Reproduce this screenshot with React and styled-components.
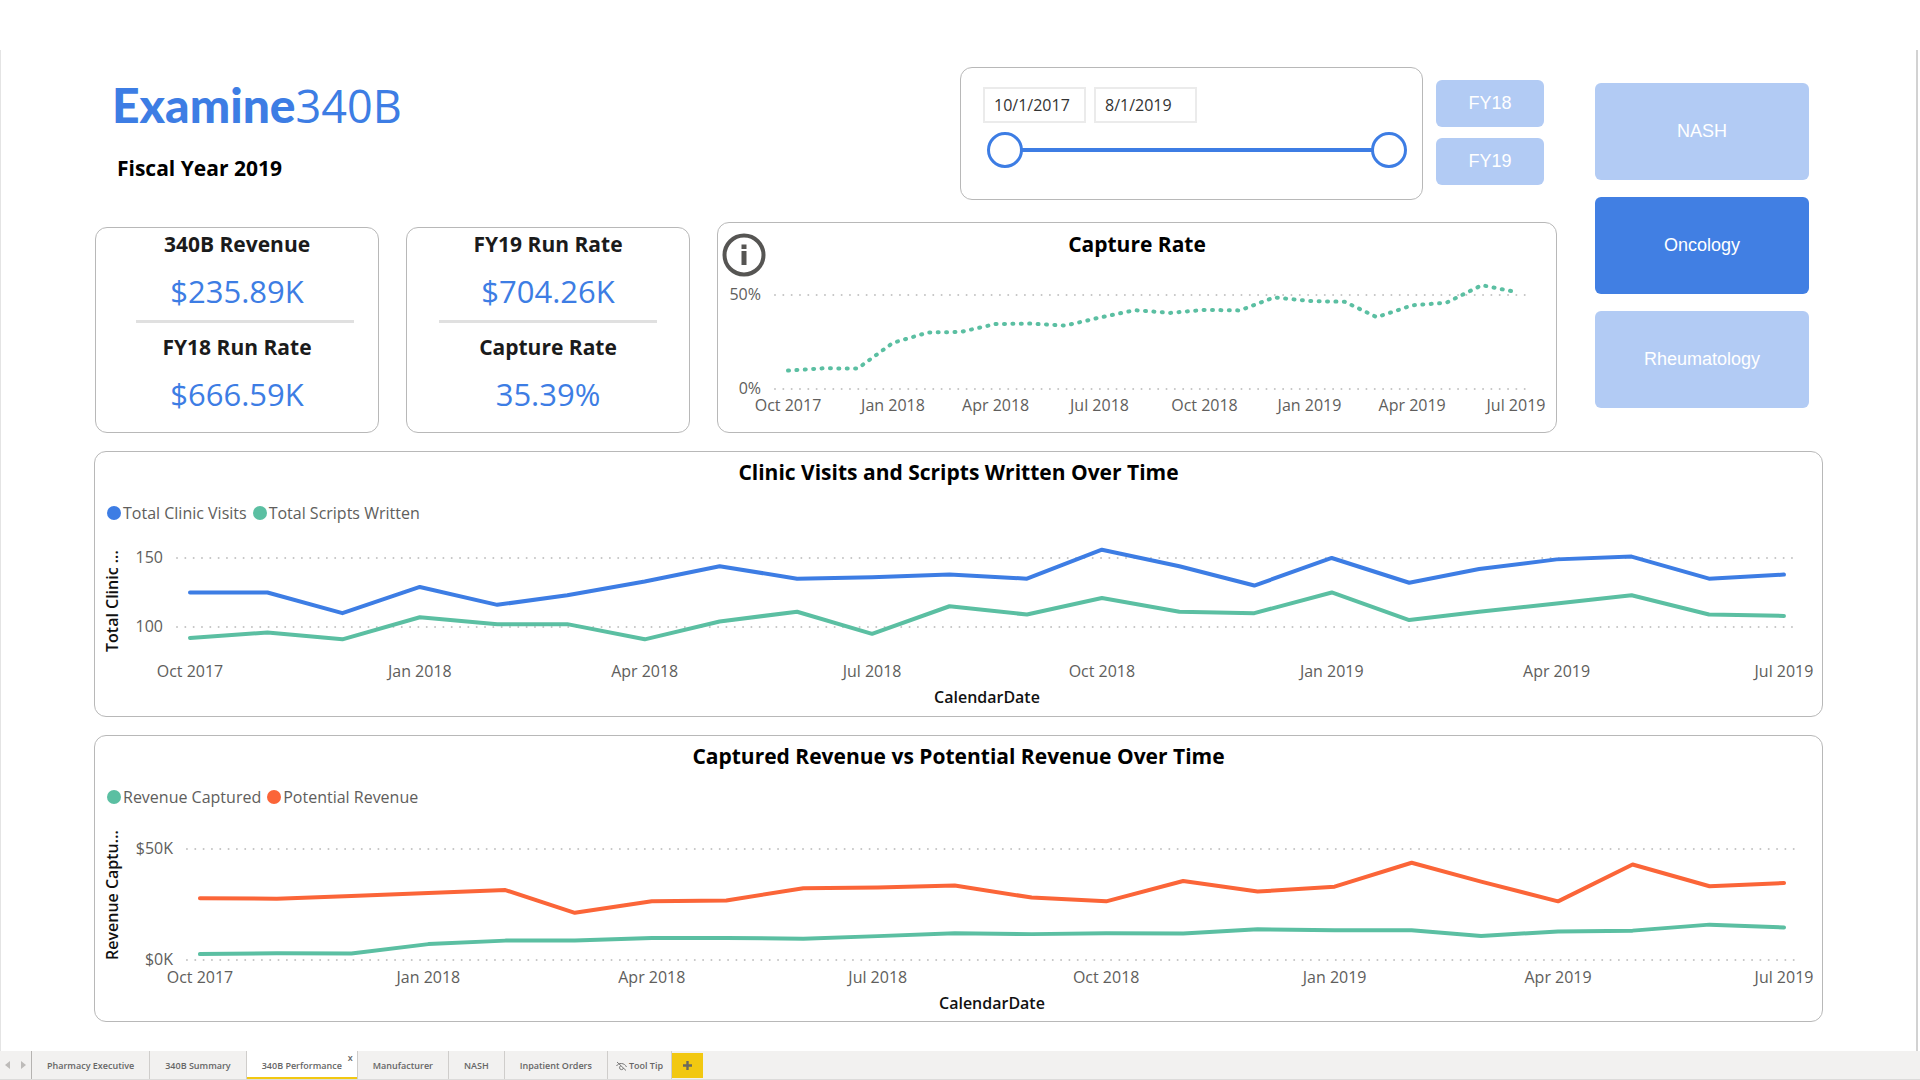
import React, { useState } from "react";
import styled, { createGlobalStyle } from "styled-components";

const BLUE = "#3d7de4";
const GREEN = "#5bbfa2";
const ORANGE = "#fb6538";

const GlobalStyle = createGlobalStyle`
  *, *::before, *::after {
    box-sizing: border-box;
  }
  body {
    margin: 0;
    background: #fff;
    color: #111;
    font-family: "Open Sans", "Noto Sans", sans-serif;
    font-size: 16px;
  }
  h1, h2, p, ul {
    margin: 0;
    padding: 0;
  }
  button, input {
    font-family: inherit;
  }
`;

//Page shell----------------------------------------------
const StyleShell = styled.div`
  min-height: 100vh;
  display: flex;
  flex-direction: column;
  padding-top: 50px;
`;

const StyleCanvas = styled.main`
  flex: 1;
  display: flex;
  flex-direction: column;
  gap: 18px;
  margin-right: 2px;
  padding: 17px 93px 28px;
  border-left: 1px solid #e4e4e4;
  border-right: 2px solid #d2d2d2;
`;

const StyleTop = styled.div`
  display: grid;
  grid-template-columns: minmax(0, 1fr) 214px;
  column-gap: 38px;
  padding-right: 14px;
`;

const StyleTopMain = styled.div`
  display: flex;
  flex-direction: column;
  gap: 22px;
`;

const StyleCard = styled.section`
  border: 1px solid #b8b8b8;
  border-radius: 12px;
  background: #fff;
`;

const StyleTitle = styled.h2`
  font-size: 21px;
  line-height: 28px;
  font-weight: 700;
  text-align: center;
  color: #000;
`;
//---------------------------------------------------------

//Header---------------------------------------------------
const StyleHeader = styled.header`
  display: flex;
  align-items: flex-start;
  gap: 13px;
  padding-right: 13px;
`;

const StyleBrand = styled.div`
  flex: 1;
  padding: 10px 0 0 18px;
`;

const StyleLogo = styled.h1`
  font-size: 45px;
  line-height: 56px;
  font-weight: 400;
  color: ${BLUE};

  strong {
    font-family: Lato, sans-serif;
    font-size: 48px;
    font-weight: 900;
  }
`;

const StylePeriod = styled.p`
  margin-top: 20px;
  padding-left: 5px;
  font-size: 21px;
  line-height: 28px;
  font-weight: 700;
  color: #000;
`;

const StyleSlicer = styled(StyleCard)`
  width: 463px;
  height: 133px;
  padding: 19px 15px 0 22px;
`;

const StyleDates = styled.div`
  display: flex;
  gap: 8px;
`;

const StyleDateInput = styled.input`
  width: 103px;
  height: 36px;
  padding: 0 9px;
  border: 2px solid #ebebeb;
  font-size: 16px;
  color: #333;
`;

const StyleRange = styled.div`
  display: grid;
  align-items: center;
  margin: 9px 0 0 4px;

  > * {
    grid-area: 1 / 1;
  }
`;

const StyleTrack = styled.div`
  height: 4px;
  margin: 0 18px;
  background: ${BLUE};
`;

const StyleThumb = styled.input`
  width: 100%;
  height: 36px;
  margin: 0;
  appearance: none;
  background: transparent;
  pointer-events: none;

  &::-webkit-slider-thumb {
    appearance: none;
    width: 36px;
    height: 36px;
    border: 3px solid ${BLUE};
    border-radius: 50%;
    background: #fff;
    pointer-events: auto;
  }
`;

const StyleYears = styled.div`
  width: 108px;
  display: flex;
  flex-direction: column;
  gap: 11px;
  padding-top: 13px;
`;

const StyleSpecialties = styled.nav`
  display: flex;
  flex-direction: column;
  gap: 17px;
  padding-top: 16px;
`;

const StyleButton = styled.button`
  width: 100%;
  height: ${(props) => (props.$tall ? "97px" : "47px")};
  border: 0;
  border-radius: 6px;
  background-color: ${(props) => (props.$active ? "#417fe3" : "#b2cbf4")};
  color: white;
  font-family: "Liberation Sans", Arial, sans-serif;
  font-size: 18px;
`;
//---------------------------------------------------------

//KPI row--------------------------------------------------
const StyleKpiRow = styled.div`
  display: grid;
  grid-template-columns: 284fr 284fr 840fr;
  column-gap: 27px;
  padding-left: 1px;
  align-items: end;
`;

const StyleKpiCard = styled(StyleCard)`
  height: 206px;
  padding-top: 2px;
`;

const StyleKpi = styled.div`
  text-align: center;
`;

const StyleKpiName = styled(StyleTitle)`
  color: #1b1b1b;
`;

const StyleKpiValue = styled.p`
  margin-top: 13px;
  font-size: 31px;
  line-height: 40px;
  font-weight: 400;
  color: ${BLUE};
`;

const StyleDivider = styled.hr`
  height: 3px;
  margin: ${(props) => (props.$shifted ? "9px 24px 10px 40px" : "9px 32px 10px")};
  border: 0;
  background: #e0e0e0;
`;

const StyleCapture = styled(StyleCard)`
  height: 211px;
  overflow: hidden;
`;

const StyleCaptureHead = styled.div`
  display: grid;
  grid-template-columns: 1fr auto 1fr;
  align-items: start;
  height: 57px;
  padding: 7px 4px 0;
`;

const StyleInfo = styled.button`
  width: 44px;
  height: 44px;
  margin-top: 3px;
  padding: 0;
  border: 0;
  background: none;
`;
//---------------------------------------------------------

//Charts---------------------------------------------------
const StyleChartCard = styled(StyleCard)`
  padding-top: 6px;
`;

const StyleLegend = styled.ul`
  display: flex;
  gap: 6px;
  margin-top: 15px;
  padding-left: 12px;
  list-style: none;
  line-height: 24px;
  color: #605e5c;
`;

const StyleLegendItem = styled.li`
  display: flex;
  align-items: center;
  gap: 2px;

  &::before {
    content: "";
    width: 14px;
    height: 14px;
    border-radius: 50%;
    background: ${(props) => props.$color};
  }
`;

const StyleSvg = styled.svg`
  display: block;
  width: 100%;
  height: auto;
  overflow: visible;

  text {
    font-size: 16px;
    fill: #605e5c;
  }
  .grid {
    stroke: #c4c4c4;
    stroke-width: 2;
    stroke-dasharray: 0 8.33;
    stroke-linecap: round;
  }
  .axis {
    font-weight: 600;
    fill: #111;
  }
`;
//---------------------------------------------------------

//Page tabs------------------------------------------------
const StyleTabBar = styled.nav`
  display: flex;
  height: 29px;
  background: #f2f1f0;
  border-bottom: 1px solid #dcdbda;
`;

const StylePager = styled.div`
  display: flex;
  align-items: center;
  width: 32px;
  border-right: 1px solid #b5b3b1;
`;

const StylePagerButton = styled.button`
  flex: 1;
  padding: 0;
  border: 0;
  background: none;
  line-height: 0;
`;

const StyleTab = styled.a`
  position: relative;
  display: flex;
  align-items: center;
  gap: 2px;
  padding: ${(props) => (props.$tight ? "0 8px" : "0 15px")};
  border-right: 1px solid #cfcdcb;
  box-shadow: ${(props) => (props.$active ? "inset 0 -2px #f2c811" : "none")};
  background: ${(props) => (props.$active ? "#fff" : "none")};
  color: #666;
  font-size: 9px;
  font-weight: 600;
  text-decoration: none;
  white-space: nowrap;
`;

const StyleClose = styled.span`
  position: absolute;
  top: 0;
  right: 4px;
  line-height: 14px;
`;

const StyleAdd = styled.button`
  width: 31px;
  margin: 2px 0 1px;
  padding: 0;
  border: 0;
  background: #f2c811;
  line-height: 0;
`;
//---------------------------------------------------------

const START = Date.UTC(2017, 9, 1);
const END = Date.UTC(2019, 6, 1);
const TICKS = [
  "Oct 2017",
  "Jan 2018",
  "Apr 2018",
  "Jul 2018",
  "Oct 2018",
  "Jan 2019",
  "Apr 2019",
  "Jul 2019",
];

const clinicVisits = [
  125, 125, 110, 129, 116, 123, 133, 144, 135, 136, 138, 135, 156, 144, 130,
  150, 132, 142, 149, 151, 135, 138,
];
const scriptsWritten = [
  92, 96, 91, 107, 102, 102, 91, 104, 111, 95, 115, 109, 121, 111, 110, 125,
  105, 111, 117, 123, 109, 108,
];
const revenueCaptured = [
  2.6, 3, 2.9, 7.1, 8.7, 8.7, 9.9, 9.9, 9.5, 10.7, 12, 11.6, 12, 11.9, 13.8,
  13.4, 13.4, 10.8, 12.8, 13.2, 15.9, 14.6,
];
const potentialRevenue = [
  27.8, 27.6, 28.8, 30.2, 31.5, 21.2, 26.4, 26.8, 32.3, 32.6, 33.5, 28.1, 26.4,
  35.6, 30.8, 33, 43.8, 35.3, 26.4, 43, 33.2, 34.7,
];
const captureRate = [
  9.8, 11, 10.9, 24.6, 30.1, 30.3, 34.6, 34.8, 33.7, 38, 41.9, 40.5, 42.1,
  41.8, 48.7, 46.8, 46.4, 38.2, 44.5, 45.9, 55.2, 51.6,
];

// x is placed by calendar day, so short months sit closer together
const LineChart = ({ label, width, height, plot, yTicks, series, xTickY, xTitle, yTitle, dotted }) => {
  const xAt = (month) => {
    const day = Date.UTC(2017, 9 + month, 1);
    return plot.x0 + ((day - START) / (END - START)) * (plot.x1 - plot.x0);
  };
  const [low, high] = yTicks;
  const yAt = (value) =>
    low.y + ((value - low.value) / (high.value - low.value)) * (high.y - low.y);

  return (
    <StyleSvg viewBox={`0 0 ${width} ${height}`} role="img" aria-label={label}>
      {yTicks.map((tick) => (
        <g key={tick.text}>
          <line className="grid" x1={plot.x0 - 13} x2={plot.x1 + 10} y1={tick.y} y2={tick.y} />
          <text x={plot.x0 - 27} y={tick.y + 5} textAnchor="end">
            {tick.text}
          </text>
        </g>
      ))}
      {series.map((line) => (
        <polyline
          key={line.color}
          points={line.data.map((v, i) => `${xAt(i).toFixed(1)},${yAt(v).toFixed(1)}`).join(" ")}
          fill="none"
          stroke={line.color}
          strokeWidth="4"
          strokeLinecap="round"
          strokeLinejoin="round"
          strokeDasharray={dotted ? "1 7.4" : undefined}
        />
      ))}
      {TICKS.map((text, i) => (
        <text key={text} x={xAt(i * 3)} y={xTickY} textAnchor="middle">
          {text}
        </text>
      ))}
      {xTitle && (
        <text className="axis" x={(plot.x0 + plot.x1) / 2} y={xTitle.y} textAnchor="middle">
          {xTitle.text}
        </text>
      )}
      {yTitle && (
        <text className="axis" transform={`translate(23 ${yTitle.y}) rotate(-90)`}>
          {yTitle.text}
        </text>
      )}
    </StyleSvg>
  );
};

const Kpi = ({ name, value }) => (
  <StyleKpi>
    <StyleKpiName>{name}</StyleKpiName>
    <StyleKpiValue>{value}</StyleKpiValue>
  </StyleKpi>
);

const Slicer = () => {
  const [from, setFrom] = useState(0);
  const [to, setTo] = useState(100);

  return (
    <StyleSlicer aria-label="Date range">
      <StyleDates>
        <StyleDateInput aria-label="Start date" defaultValue="10/1/2017" />
        <StyleDateInput aria-label="End date" defaultValue="8/1/2019" />
      </StyleDates>
      <StyleRange>
        <StyleTrack />
        <StyleThumb
          type="range"
          aria-label="Range start"
          value={from}
          onChange={(e) => setFrom(Math.min(+e.target.value, to))}
        />
        <StyleThumb
          type="range"
          aria-label="Range end"
          value={to}
          onChange={(e) => setTo(Math.max(+e.target.value, from))}
        />
      </StyleRange>
    </StyleSlicer>
  );
};

const TabBar = () => (
  <StyleTabBar aria-label="Report pages">
    <StylePager>
      <StylePagerButton aria-label="Previous page">
        <svg width="5" height="8" viewBox="0 0 5 8">
          <path d="M5 0v8L0 4z" fill="#bdbbb9" />
        </svg>
      </StylePagerButton>
      <StylePagerButton aria-label="Next page">
        <svg width="5" height="8" viewBox="0 0 5 8">
          <path d="M0 0v8l5-4z" fill="#bdbbb9" />
        </svg>
      </StylePagerButton>
    </StylePager>
    <StyleTab href="#executive">Pharmacy Executive</StyleTab>
    <StyleTab href="#summary">340B Summary</StyleTab>
    <StyleTab href="#performance" $active aria-current="page">
      340B Performance
      <StyleClose>x</StyleClose>
    </StyleTab>
    <StyleTab href="#manufacturer">Manufacturer</StyleTab>
    <StyleTab href="#nash">NASH</StyleTab>
    <StyleTab href="#inpatient">Inpatient Orders</StyleTab>
    <StyleTab href="#tooltip" $tight>
      <svg width="11" height="12" viewBox="0 0 11 12" fill="none" stroke="#777">
        <path d="M.5 7C2.5 3.5 8.5 3.5 10.5 8M1 3l9 8.5" />
        <path d="M7.5 9a2 2 0 1 1-2.5-2.3" />
      </svg>
      Tool Tip
    </StyleTab>
    <StyleAdd aria-label="New page">
      <svg width="9" height="9" viewBox="0 0 9 9">
        <path d="M4.5 0v9M0 4.5h9" stroke="#6b6a5e" strokeWidth="2.4" />
      </svg>
    </StyleAdd>
  </StyleTabBar>
);

const App = () => {
  const [specialty, setSpecialty] = useState("Oncology");
  const [year, setYear] = useState(null);

  return (
    <StyleShell>
      <GlobalStyle />
      <StyleCanvas>
        <StyleTop>
          <StyleTopMain>
            <StyleHeader>
              <StyleBrand>
                <StyleLogo>
                  <strong>Examine</strong>340B
                </StyleLogo>
                <StylePeriod>Fiscal Year 2019</StylePeriod>
              </StyleBrand>
              <Slicer />
              <StyleYears>
                {["FY18", "FY19"].map((name) => (
                  <StyleButton key={name} $active={name === year} onClick={() => setYear(name)}>
                    {name}
                  </StyleButton>
                ))}
              </StyleYears>
            </StyleHeader>

            <StyleKpiRow>
              <StyleKpiCard>
                <Kpi name="340B Revenue" value="$235.89K" />
                <StyleDivider $shifted />
                <Kpi name="FY18 Run Rate" value="$666.59K" />
              </StyleKpiCard>
              <StyleKpiCard>
                <Kpi name="FY19 Run Rate" value="$704.26K" />
                <StyleDivider />
                <Kpi name="Capture Rate" value="35.39%" />
              </StyleKpiCard>
              <StyleCapture>
                <StyleCaptureHead>
                  <StyleInfo aria-label="About this chart">
                    <svg width="44" height="44" viewBox="0 0 44 44" fill="#565553">
                      <circle cx="22" cy="22" r="19.5" fill="none" stroke="#565553" strokeWidth="4" />
                      <path d="M19.5 11.5h5V16h-5zM19.5 18h5v14h-5z" />
                    </svg>
                  </StyleInfo>
                  <StyleTitle>Capture Rate</StyleTitle>
                </StyleCaptureHead>
                <LineChart
                  label="Capture Rate"
                  width={838}
                  height={152}
                  plot={{ x0: 70, x1: 798 }}
                  yTicks={[
                    { value: 0, text: "0%", y: 109 },
                    { value: 50, text: "50%", y: 15 },
                  ]}
                  series={[{ color: GREEN, data: captureRate }]}
                  xTickY={131}
                  dotted
                />
              </StyleCapture>
            </StyleKpiRow>
          </StyleTopMain>

          <StyleSpecialties aria-label="Specialty">
            {["NASH", "Oncology", "Rheumatology"].map((name) => (
              <StyleButton
                key={name}
                $tall
                $active={name === specialty}
                onClick={() => setSpecialty(name)}
              >
                {name}
              </StyleButton>
            ))}
          </StyleSpecialties>
        </StyleTop>

        <StyleChartCard>
          <StyleTitle>Clinic Visits and Scripts Written Over Time</StyleTitle>
          <StyleLegend>
            <StyleLegendItem $color={BLUE}>Total Clinic Visits</StyleLegendItem>
            <StyleLegendItem $color={GREEN}>Total Scripts Written</StyleLegendItem>
          </StyleLegend>
          <LineChart
            label="Clinic visits and scripts written by month"
            width={1728}
            height={191}
            plot={{ x0: 95, x1: 1690 }}
            yTicks={[
              { value: 100, text: "100", y: 102 },
              { value: 150, text: "150", y: 33 },
            ]}
            series={[
              { color: GREEN, data: scriptsWritten },
              { color: BLUE, data: clinicVisits },
            ]}
            xTickY={152}
            xTitle={{ text: "CalendarDate", y: 178 }}
            yTitle={{ text: "Total Clinic ...", y: 127 }}
          />
        </StyleChartCard>

        <StyleChartCard>
          <StyleTitle>Captured Revenue vs Potential Revenue Over Time</StyleTitle>
          <StyleLegend>
            <StyleLegendItem $color={GREEN}>Revenue Captured</StyleLegendItem>
            <StyleLegendItem $color={ORANGE}>Potential Revenue</StyleLegendItem>
          </StyleLegend>
          <LineChart
            label="Captured and potential revenue by month"
            width={1728}
            height={212}
            plot={{ x0: 105, x1: 1690 }}
            yTicks={[
              { value: 0, text: "$0K", y: 151 },
              { value: 50, text: "$50K", y: 40 },
            ]}
            series={[
              { color: GREEN, data: revenueCaptured },
              { color: ORANGE, data: potentialRevenue },
            ]}
            xTickY={174}
            xTitle={{ text: "CalendarDate", y: 200 }}
            yTitle={{ text: "Revenue Captu...", y: 151 }}
          />
        </StyleChartCard>
      </StyleCanvas>
      <TabBar />
    </StyleShell>
  );
};

export default App;
